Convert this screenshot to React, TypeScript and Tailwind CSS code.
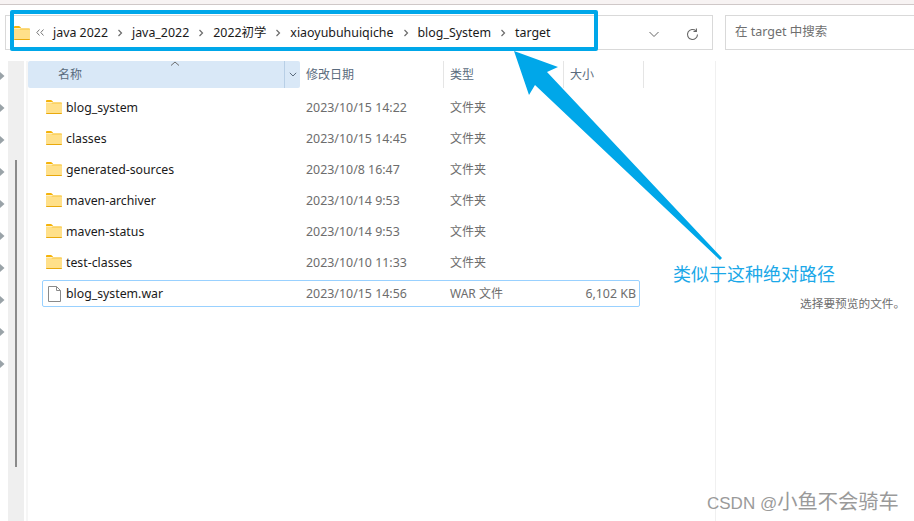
const font = "font-['Noto_Sans','Noto_Sans_CJK_SC',sans-serif]";

const crumbs = ["java 2022", "java_2022", "2022初学", "xiaoyubuhuiqiche", "blog_System", "target"];

const rows = [
  { name: "blog_system", date: "2023/10/15 14:22", type: "文件夹", size: "" },
  { name: "classes", date: "2023/10/15 14:45", type: "文件夹", size: "" },
  { name: "generated-sources", date: "2023/10/8 16:47", type: "文件夹", size: "" },
  { name: "maven-archiver", date: "2023/10/14 9:53", type: "文件夹", size: "" },
  { name: "maven-status", date: "2023/10/14 9:53", type: "文件夹", size: "" },
  { name: "test-classes", date: "2023/10/10 11:33", type: "文件夹", size: "" },
  { name: "blog_system.war", date: "2023/10/15 14:56", type: "WAR 文件", size: "6,102 KB", file: true },
];

const FolderIcon = () => (
  <svg width="16" height="14" viewBox="0 0 16 14" className="shrink-0">
    <path d="M0 1.2C0 .5.5 0 1.2 0h3.6c.5 0 .8.2 1.1.5L7.2 2H0z" fill="#f5b30a" />
    <path d="M0 2.4h14.8c.7 0 1.2.5 1.2 1.2v9.2c0 .7-.5 1.2-1.2 1.2H1.2C.5 14 0 13.5 0 12.8z" fill="#ffe08a" />
    <path d="M0 3.4h16v-.2c0-.5-.5-.8-1.2-.8H6.6L5.4 3.4z" fill="#f7c63d" />
    <path d="M0 13h16v-.2.2c0 .6-.5 1-1.2 1H1.2C.5 14 0 13.6 0 13z" fill="#e9a90c" />
  </svg>
);

const FileIcon = () => (
  <svg width="13" height="16" viewBox="0 0 13 16" className="shrink-0">
    <path d="M.5.5h8l4 4v11H.5z" fill="#fff" stroke="#8a8a8a" />
    <path d="M8.5.5v4h4" fill="none" stroke="#8a8a8a" />
  </svg>
);

const Chevron = () => (
  <svg width="6" height="8" viewBox="0 0 6 8" className="shrink-0">
    <path d="M1.5 1l3 3-3 3" fill="none" stroke="#6b6b6b" strokeWidth="1.2" />
  </svg>
);

const TreeArrow = () => (
  <svg width="5" height="8" viewBox="0 0 5 8" className="block">
    <path d="M0 0l4.5 4L0 8z" fill="#9aa3a8" />
  </svg>
);

const Row = ({ row }: { row: (typeof rows)[number] }) => (
  <div
    className={`flex items-center h-[27px] mb-[4px] ml-[14px] w-[598px] rounded-[2px] border ${
      row.file ? "border-[#99d1ff]" : "border-transparent"
    }`}
  >
    <div className={`w-[23px] flex justify-center shrink-0 ${row.file ? "" : "pr-[2px] pb-[2px]"}`}>
      {row.file ? <FileIcon /> : <FolderIcon />}
    </div>
    <span className="w-[240px] pt-[2px] text-[#1a1a1a] shrink-0">{row.name}</span>
    <span className="w-[144px] pt-[2px] text-[#6d6d6d] shrink-0 text-[12.4px]">{row.date}</span>
    <span className="w-[100px] text-[#6d6d6d] shrink-0 text-[12px]">{row.type}</span>
    <span className="w-[86px] pt-[2px] text-right text-[#6d6d6d] text-[12.4px]">{row.size}</span>
  </div>
);

export default function App() {
  return (
    <div className={`relative w-[914px] h-[521px] overflow-hidden bg-white text-[12.3px] ${font}`}>
      <div className="h-[5px] bg-[#f7f3f3] border-b border-[#cfc8c8]" />

      {/* address + search */}
      <div className="flex pt-[10px] pl-[5px] h-[56px]">
        <div className="flex items-center w-[708px] h-[35px] border border-[#d9d9d9] pl-[8px]">
          <FolderIcon />
          <svg width="8" height="7" viewBox="0 0 8 7" className="ml-[6px] mr-[9px] shrink-0">
            <path d="M3.5.5L.8 3.5l2.7 3M7.5.5L4.8 3.5l2.7 3" fill="none" stroke="#777" />
          </svg>
          <div className="flex items-center gap-[9px] pt-[2px] text-[12.4px] text-[#1a1a1a]">
            {crumbs.map((c, i) => (
              <div key={c} className="flex items-center gap-[9px]">
                <span>{c}</span>
                {i < crumbs.length - 1 && <Chevron />}
              </div>
            ))}
          </div>
          <div className="ml-auto mt-[4px] flex items-center gap-[26px] pr-[13px]">
            <svg width="12" height="7" viewBox="0 0 12 7">
              <path d="M1.5 1l4.5 4.5L10.5 1" fill="none" stroke="#666" />
            </svg>
            <svg width="13" height="13" viewBox="0 0 13 13">
              <path d="M11.5 6.5a5 5 0 1 1-1.6-3.7" fill="none" stroke="#666" strokeWidth="1.1" />
              <path d="M10.4.6v2.9H7.5" fill="none" stroke="#666" strokeWidth="1.1" />
            </svg>
          </div>
        </div>
        <div className="ml-[12px] flex-1 h-[35px] border border-[#d9d9d9] border-r-0 pl-[9px] flex items-center text-[#6f6f6f] text-[12.5px]">
          在 target 中搜索
        </div>
      </div>

      <div className="flex h-[460px]">
        {/* tree arrows */}
        <div className="w-[8px] pt-[11px] flex flex-col gap-[24px]">
          {[0, 1, 2, 3, 4, 5, 6, 7, 8, 9].map((n) => (
            <TreeArrow key={n} />
          ))}
        </div>
        {/* scrollbar */}
        <div className="w-[16px] bg-[#efefef] pl-[7px] pt-[99px]">
          <div className="w-[2px] h-[307px] bg-[#8a8a8a]" />
        </div>
        <div className="w-[2px]" />
        <div className="w-[2px] bg-[#f6f6f6]" />

        {/* list */}
        <div className="w-[688px] border-r border-[#f0f0f0]">
          <div className="relative flex h-[27px] text-[#5a6b7d] text-[12px] mb-[6px]">
            <div className="flex w-[272px] h-full rounded-[2px] bg-[#d9e8f7]">
              <div className="flex-1 pl-[30px] flex items-center">名称</div>
              <div className="w-[16px] border-l border-[#b8cfe6] flex items-center justify-center">
                <svg width="8" height="5" viewBox="0 0 8 5">
                  <path d="M.8.8L4 4l3.2-3.2" fill="none" stroke="#5a6b7d" />
                </svg>
              </div>
            </div>
            <svg width="10" height="5" viewBox="0 0 10 5" className="absolute left-[142px] top-0">
              <path d="M1 4.5L5 1l4 3.5" fill="none" stroke="#6e6e6e" />
            </svg>
            <div className="w-[144px] pl-[6px] flex items-center border-r border-[#e5e5e5]">修改日期</div>
            <div className="w-[120px] pl-[6px] flex items-center border-r border-[#e5e5e5]">类型</div>
            <div className="w-[80px] pl-[6px] flex items-center border-r border-[#e5e5e5]">大小</div>
          </div>
          {rows.map((r) => (
            <Row key={r.name} row={r} />
          ))}
        </div>

        <div className="flex-1 pt-[234px] pl-[84px] text-[11.7px] text-[#6d6d6d] whitespace-nowrap">
          选择要预览的文件。
        </div>
      </div>

      {/* annotation */}
      <div className="absolute left-[10px] top-[10px] w-[588px] h-[41px] border-[4px] border-[#00a7e9] rounded-[2px]" />
      <svg width="914" height="521" viewBox="0 0 914 521" className="absolute inset-0 pointer-events-none">
        <path d="M514 51L558 67L547 72L722 258L720 260L535 85L529 95z" fill="#00a7e9" />
      </svg>
      <div className="absolute left-[673px] top-[263px] text-[18px] leading-[22px] text-[#1ba8e8]">类似于这种绝对路径</div>
      <div className="absolute left-[707px] top-[490px] text-[17px] leading-[24px] text-[#9a9a9a] font-['Liberation_Sans','Noto_Sans_CJK_SC',sans-serif]">
        CSDN @<span className="text-[20.3px]">小鱼不会骑车</span>
      </div>
    </div>
  );
}
